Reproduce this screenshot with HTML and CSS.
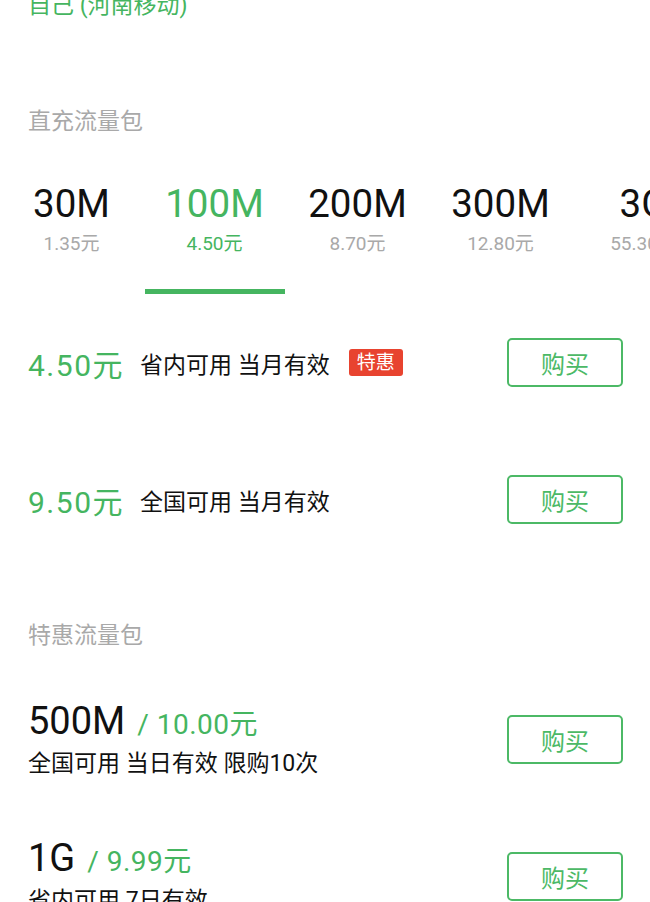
FILE: index.html
```html
<!DOCTYPE html>
<html lang="zh-CN">
<head>
<meta charset="utf-8">
<title>流量充值</title>
<link rel="stylesheet" href="styles.css">
</head>
<body>
<div class="page">
  <div class="carrier">自己 (河南移动)</div>

  <div class="section-title first">直充流量包</div>

  <div class="tabs">
    <div class="tab"><div class="tab-size">30M</div><div class="tab-price">1.35元</div></div>
    <div class="tab active"><div class="tab-size">100M</div><div class="tab-price">4.50元</div><div class="tab-bar"></div></div>
    <div class="tab"><div class="tab-size">200M</div><div class="tab-price">8.70元</div></div>
    <div class="tab"><div class="tab-size">300M</div><div class="tab-price">12.80元</div></div>
    <div class="tab"><div class="tab-size">3G</div><div class="tab-price">55.30元</div></div>
  </div>

  <div class="offer">
    <div class="offer-main">
      <span class="price">4.50元</span>
      <span class="desc">省内可用 当月有效</span>
      <span class="badge">特惠</span>
    </div>
    <button class="buy">购买</button>
  </div>

  <div class="offer">
    <div class="offer-main">
      <span class="price">9.50元</span>
      <span class="desc">全国可用 当月有效</span>
    </div>
    <button class="buy">购买</button>
  </div>

  <div class="section-title second">特惠流量包</div>

  <div class="offer">
    <div class="deal">
      <div class="deal-head"><span class="deal-size">500M</span><span class="deal-price">/ 10.00元</span></div>
      <div class="deal-desc">全国可用 当日有效 限购10次</div>
    </div>
    <button class="buy">购买</button>
  </div>

  <div class="offer">
    <div class="deal">
      <div class="deal-head"><span class="deal-size">1G</span><span class="deal-price">/ 9.99元</span></div>
      <div class="deal-desc">省内可用 7日有效</div>
    </div>
    <button class="buy">购买</button>
  </div>
</div>
</body>
</html>
```

FILE: styles.css
```css
html, body {
  margin: 0;
  padding: 0;
  background: #ffffff;
}

body {
  font-family: Roboto, "Noto Sans CJK SC", sans-serif;
  color: #111111;
  overflow: hidden;
}

.page {
  width: 650px;
  overflow: hidden;
}

.carrier {
  margin-top: -10px;
  padding-left: 28px;
  font-size: 23px;
  line-height: 32px;
  color: #45b560;
}

.section-title {
  padding-left: 28px;
  font-size: 23px;
  line-height: 32px;
  color: #a9a9a9;
}

.section-title.first {
  margin-top: 84px;
}

.section-title.second {
  margin-top: 52px;
  margin-bottom: 19px;
}

.tabs {
  display: flex;
  height: 112px;
  margin-top: 44px;
}

.tab {
  flex: 0 0 143px;
  display: flex;
  flex-direction: column;
  align-items: center;
}

.tab-size {
  font-size: 38.5px;
  line-height: 44px;
  color: #111111;
  white-space: nowrap;
}

.tab-price {
  margin-top: 6px;
  font-size: 19px;
  line-height: 24px;
  color: #a9a9a9;
  white-space: nowrap;
}

.tab.active .tab-size,
.tab.active .tab-price {
  color: #45b560;
}

.tab-bar {
  margin-top: 33px;
  width: 140px;
  height: 5px;
  background: #45b560;
}

.offer {
  display: flex;
  align-items: center;
  justify-content: space-between;
  height: 137px;
  padding: 0 27px 0 28px;
}

.offer-main {
  display: flex;
  align-items: center;
}

.price {
  font-size: 30px;
  letter-spacing: 1.5px;
  color: #45b560;
}

.desc {
  margin-left: 16px;
  font-size: 23px;
  color: #111111;
}

.badge {
  display: block;
  margin-left: 19px;
  padding: 0 8px;
  height: 27px;
  line-height: 27px;
  font-size: 19px;
  color: #ffffff;
  background: #e8432f;
  border-radius: 3px;
}

.buy {
  width: 116px;
  height: 49px;
  box-sizing: border-box;
  border: 2px solid #4cb966;
  border-radius: 5px;
  background: #ffffff;
  color: #4cb966;
  font-family: Roboto, "Noto Sans CJK SC", sans-serif;
  font-size: 24px;
  padding: 0;
}

.deal {
  display: flex;
  flex-direction: column;
}

.deal-head {
  line-height: 40px;
  white-space: nowrap;
}

.deal-size {
  font-size: 38px;
  color: #111111;
}

.deal-price {
  margin-left: 12px;
  font-size: 28px;
  letter-spacing: 0.5px;
  color: #45b560;
}

.deal-desc {
  font-size: 23px;
  line-height: 30px;
  color: #111111;
}
```
